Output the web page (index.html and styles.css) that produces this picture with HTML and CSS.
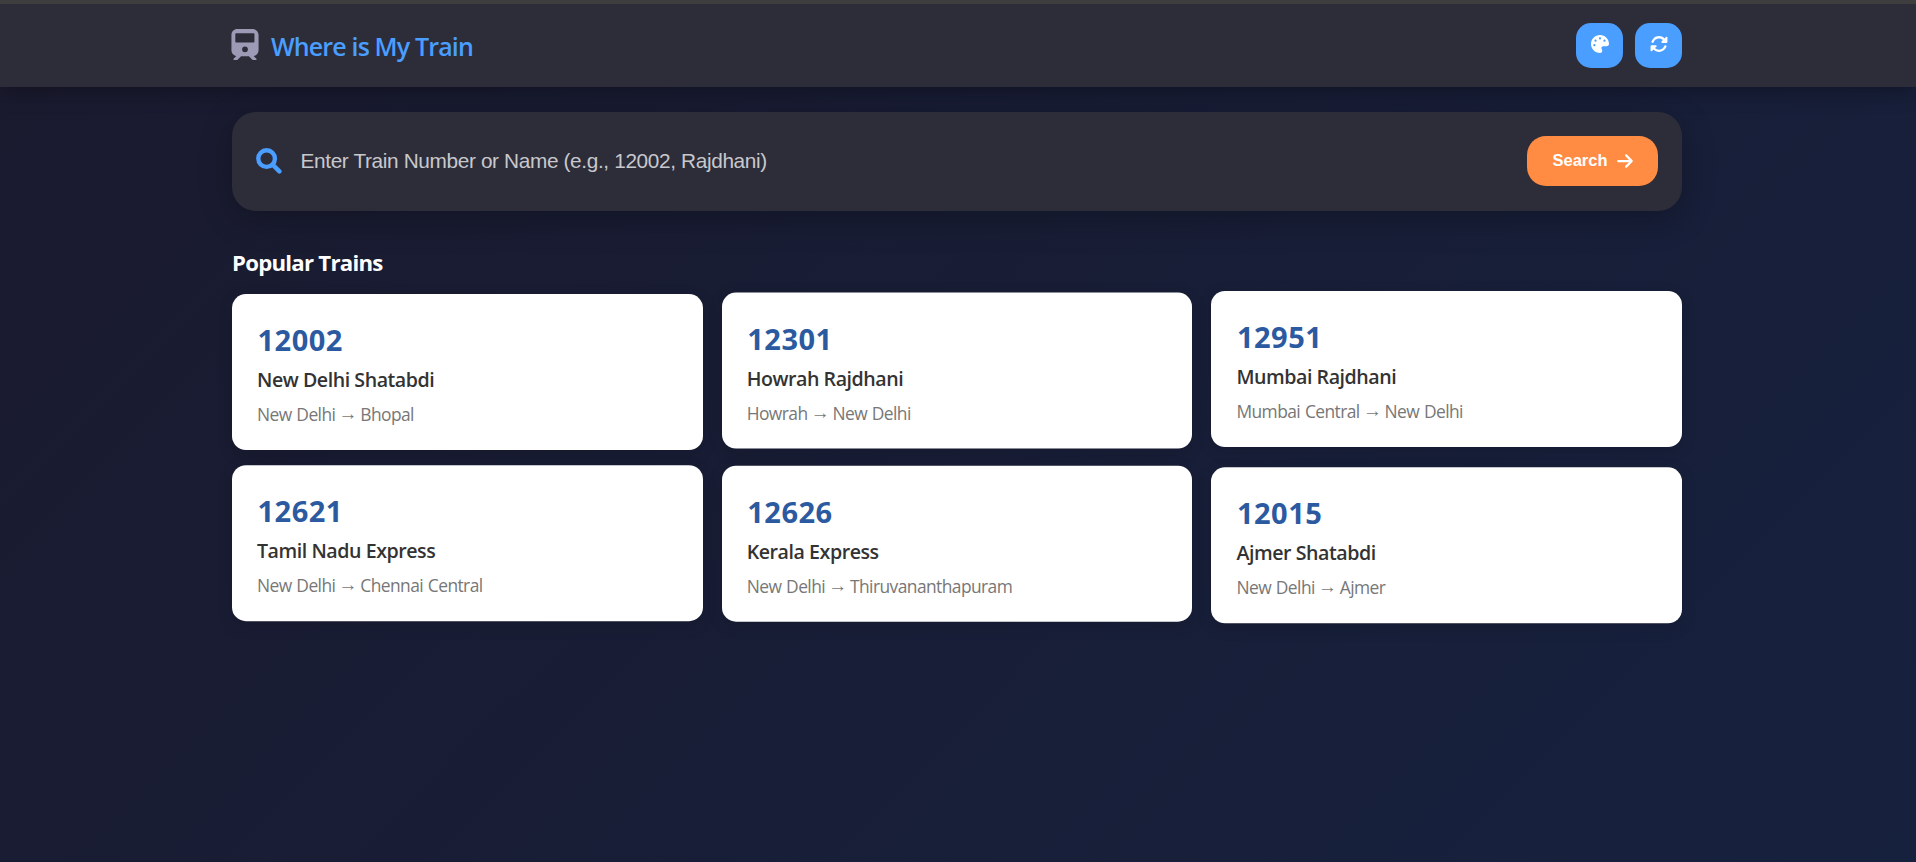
FILE: index.html
```html
<!DOCTYPE html>
<html lang="en">
<head>
<meta charset="utf-8">
<title>Where is My Train</title>
<link rel="stylesheet" href="styles.css">
</head>
<body>
<header class="header">
  <div class="container header-content">
    <div class="logo">
      <svg class="logo-icon" viewBox="0 0 448 512"><path fill-rule="evenodd" d="M96 0C43 0 0 43 0 96V352c0 48 35.2 87.7 81.100 94.900l-46 46C28.100 499.900 33.100 512 43 512H82.700c8.500 0 16.600-3.400 22.600-9.400L160 448H288l54.600 54.600c6 6 14.100 9.400 22.600 9.400H405c10 0 15-12.100 7.900-19.100l-46-46c46-7.100 81.100-46.900 81.100-94.900V96c0-53-43-96-96-96H96zM64 84c0-8 6-14 14-14H366c8 0 14 6 14 14v126c0 8-6 14-14 14H78c-8 0-14-6-14-14V84zM224 288a48 48 0 1 1 0 96 48 48 0 1 1 0-96z"/></svg>
      <h1 class="logo-text">Where is My Train</h1>
    </div>
    <div class="actions">
      <button class="icon-btn" aria-label="Theme"><svg viewBox="0 0 512 512"><path d="M512 256c0 .9 0 1.800 0 2.700c-.4 36.500-33.600 61.300-70.100 61.300H344c-26.500 0-48 21.500-48 48c0 3.400 .4 6.700 1 9.900c2.100 10.200 6.500 20 10.800 29.900c6.100 13.800 12.100 27.500 12.100 42c0 31.800-21.600 60.700-53.400 62c-3.500 .1-7 .2-10.600 .2C114.600 512 0 397.400 0 256S114.600 0 256 0S512 114.600 512 256zM128 288a32 32 0 1 0 -64 0 32 32 0 1 0 64 0zm0-96a32 32 0 1 0 0-64 32 32 0 1 0 0 64zM288 96a32 32 0 1 0 -64 0 32 32 0 1 0 64 0zm96 96a32 32 0 1 0 0-64 32 32 0 1 0 0 64z"/></svg></button>
      <button class="icon-btn" aria-label="Refresh"><svg viewBox="0 0 512 512"><path d="M142.900 142.900c62.200-62.200 162.700-62.500 225.300-1L327 183c-6.900 6.900-8.900 17.200-5.200 26.200s12.500 14.800 22.200 14.800H472c13.300 0 24-10.700 24-24V72c0-9.700-5.800-18.500-14.800-22.200s-19.300-1.700-26.200 5.200L413.400 96.600c-87.600-86.500-228.700-86.200-315.800 1C73.200 122 55.600 150.700 44.800 181.400c-5.900 16.700 2.900 34.900 19.500 40.800s34.900-2.900 40.800-19.500c7.700-21.800 20.200-42.300 37.800-59.800zM16 312V440c0 9.700 5.800 18.500 14.800 22.200s19.300 1.700 26.200-5.200l41.600-41.600c87.600 86.500 228.700 86.200 315.800-1c24.400-24.400 42.100-53.100 52.900-83.700c5.900-16.700-2.900-34.900-19.500-40.800s-34.900 2.900-40.800 19.500c-7.700 21.800-20.200 42.300-37.800 59.800c-62.200 62.200-162.700 62.500-225.300 1L185 329c6.900-6.900 8.900-17.200 5.200-26.200s-12.500-14.800-22.200-14.800H40c-13.300 0-24 10.700-24 24z"/></svg></button>
    </div>
  </div>
</header>
<main class="container main">
  <section class="search-box">
    <svg class="search-icon" viewBox="0 0 25 25"><circle cx="10.200" cy="10.200" r="8"/><path d="M16 16L22.500 22.500"/></svg>
    <input class="search-input" type="text" placeholder="Enter Train Number or Name (e.g., 12002, Rajdhani)">
    <button class="search-btn">Search <svg viewBox="0 0 448 512"><path d="M438.600 278.600c12.500-12.500 12.500-32.800 0-45.300l-160-160c-12.500-12.500-32.800-12.500-45.300 0s-12.500 32.800 0 45.300L338.800 224 32 224c-17.700 0-32 14.300-32 32s14.300 32 32 32l306.700 0L233.400 393.400c-12.500 12.500-12.500 32.800 0 45.300s32.800 12.500 45.300 0l160-160z"/></svg></button>
  </section>
  <h2 class="section-title">Popular Trains</h2>
  <div class="grid">
    <article class="card float-1"><div class="number">12002</div><div class="name">New Delhi Shatabdi</div><div class="route">New Delhi <span class="arrow">→</span> Bhopal</div></article>
    <article class="card float-2"><div class="number">12301</div><div class="name">Howrah Rajdhani</div><div class="route">Howrah <span class="arrow">→</span> New Delhi</div></article>
    <article class="card float-3"><div class="number">12951</div><div class="name">Mumbai Rajdhani</div><div class="route">Mumbai Central <span class="arrow">→</span> New Delhi</div></article>
    <article class="card float-4"><div class="number">12621</div><div class="name">Tamil Nadu Express</div><div class="route">New Delhi <span class="arrow">→</span> Chennai Central</div></article>
    <article class="card float-5"><div class="number">12626</div><div class="name">Kerala Express</div><div class="route">New Delhi <span class="arrow">→</span> Thiruvananthapuram</div></article>
    <article class="card float-6"><div class="number">12015</div><div class="name">Ajmer Shatabdi</div><div class="route">New Delhi <span class="arrow">→</span> Ajmer</div></article>
  </div>
</main>
</body>
</html>
```
FILE: styles.css
```css
* { box-sizing: border-box; margin: 0; padding: 0; }
html { height: 100%; }
body {
  height: 100%;
  overflow: hidden;
  font-family: "Open Sans", "Noto Sans", sans-serif;
  color: #fff;
  background: linear-gradient(135deg, #1a1a2e 0%, #16213e 100%);
}
.container { width: 1450px; margin: 0 232px; }
.header {
  height: 87px;
  background: #2d2d3a;
  border-top: 4px solid #3e3e3e;
  box-shadow: 0 4px 20px rgba(0, 0, 0, .3);
}
.header-content { display: flex; justify-content: space-between; align-items: center; height: 83px; }
.logo { display: flex; align-items: center; gap: 12px; margin: -2px 0 0 -1px; }
.logo-icon { width: 28px; height: 31px; fill: #9c9ab5; margin-bottom: 1px; }
.logo-text { font-size: 25px; line-height: 36px; font-weight: 600; color: #4a9eff; letter-spacing: -.85px; padding-top: 2px; }
.actions { display: flex; gap: 12px; }
.icon-btn {
  width: 47px; height: 45px;
  display: flex; align-items: flex-start; justify-content: center;
  padding-top: 12px;
  border: 0; border-radius: 15px;
  background: #4a9eff;
}
.icon-btn svg { width: 18px; height: 18px; fill: #fff; }
.main { padding-top: 25px; }
.search-box {
  height: 99px;
  display: flex; align-items: center;
  padding: 0 24px 2px;
  background: #2d2d3a;
  border-radius: 24px;
  box-shadow: 0 8px 32px rgba(0, 0, 0, .25);
}
.search-icon { width: 26px; height: 26px; fill: none; stroke: #4a9eff; stroke-width: 4.200; stroke-linecap: round; margin-top: 1px; }
.search-input {
  flex: 1; height: 50px;
  margin-left: 18.5px;
  border: 0; outline: 0; background: none;
  font: 20.8px "Liberation Sans", Arial, sans-serif;
  letter-spacing: -.36px;
  color: #fff;
}
.search-input::placeholder { color: #c8c8cc; opacity: 1; }
.search-btn {
  width: 131px; height: 50px;
  display: flex; align-items: center; justify-content: center; gap: 9px;
  border: 0; border-radius: 19px;
  background: #ff8c42; color: #fff;
  font: bold 16.500px "Liberation Sans", Arial, sans-serif;
}
.search-btn svg { width: 16px; height: 18px; fill: #fff; }
.section-title { margin-top: 36px; font-size: 22.2px; line-height: 32px; font-weight: 700; letter-spacing: -.75px; }
.grid { display: grid; grid-template-columns: repeat(3, 1fr); gap: 19.2px; margin-top: 16px; }
.card {
  height: 156px;
  padding: 24px 25px;
  color: #333;
  background: #fff;
  border-radius: 14px;
  box-shadow: 0 4px 16px rgba(0, 0, 0, .12);
}
.number { font-size: 29px; line-height: 43px; font-weight: 700; color: #2c5aa0; letter-spacing: .5px; padding-left: .5px; }
.name { font-size: 19.6px; line-height: 28px; font-weight: 600; margin-top: 5px; letter-spacing: -.45px; }
.route { font-size: 17.4px; line-height: 26px; color: #777; margin-top: 7px; letter-spacing: -.57px; word-spacing: .8px; }
.arrow { font-family: "Liberation Sans", sans-serif; font-size: 19px; line-height: 0; vertical-align: 1.5px; margin: 0 -1.5px; }
.float-1 { transform: translateY(-.9px); }
.float-2 { transform: translateY(-2.400px); }
.float-3 { transform: translateY(-4px); }
.float-4 { transform: translateY(-4.800px); }
.float-5 { transform: translateY(-4.300px); }
.float-6 { transform: translateY(-2.700px); }
```
